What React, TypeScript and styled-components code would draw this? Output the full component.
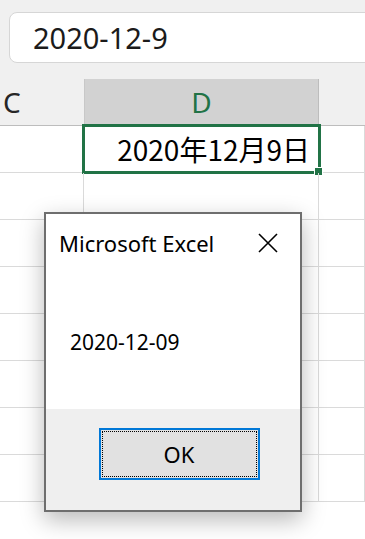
import styled, { createGlobalStyle } from "styled-components";

const GlobalStyle = createGlobalStyle`
    html, body {
        margin: 0;
        padding: 0;
        background: #ffffff;
    }
    body {
        font-family: "Noto Sans", "Open Sans", "Noto Sans CJK JP", sans-serif;
    }
`;

const Page = styled.div`
    position: relative;
    width: 365px;
    height: 539px;
    overflow: hidden;
    background: #ffffff;
`;

const FormulaArea = styled.div`
    height: 79px;
    box-sizing: border-box;
    padding: 12px 0 0 9px;
    background: #f0f0f0;
`;

const FormulaBox = styled.div`
    width: 400px;
    height: 51px;
    box-sizing: border-box;
    display: flex;
    align-items: center;
    padding-left: 23px;
    background: #ffffff;
    border: 1px solid #d6d6d6;
    border-radius: 8px;
    font-size: 29px;
    color: #1b1b1b;
`;

const HeaderRow = styled.div`
    display: grid;
    grid-template-columns: 84px 235px 1fr;
    height: 46px;
    background: #f0f0f0;
    border-bottom: 1px solid #bdbdbd;
`;

const HeaderCell = styled.div<{ $active?: boolean }>`
    display: flex;
    align-items: center;
    justify-content: ${(p) => (p.$active ? "center" : "flex-start")};
    padding-left: ${(p) => (p.$active ? "0" : "3px")};
    font-size: 28px;
    color: ${(p) => (p.$active ? "#217346" : "#262626")};
    background: ${(p) => (p.$active ? "#d2d2d2" : "transparent")};
    border-right: ${(p) => (p.$active ? "1px solid #bdbdbd" : "none")};
    border-left: ${(p) => (p.$active ? "1px solid #c8c8c8" : "none")};
`;

const Row = styled.div`
    display: grid;
    grid-template-columns: 84px 235px 1fr;
    height: 47px;
    box-sizing: border-box;
    border-bottom: 1px solid #dadada;
`;

const Cell = styled.div`
    position: relative;
    display: flex;
    align-items: center;
    justify-content: flex-end;
    padding-right: 8px;
    border-right: 1px solid #dadada;
    font-family: "Noto Sans CJK JP", "Noto Sans", sans-serif;
    font-size: 28px;
    color: #000000;
`;

const Selection = styled.div`
    position: absolute;
    left: -2px;
    top: -2px;
    right: -3px;
    bottom: -2px;
    border: 3px solid #217346;
    pointer-events: none;
`;

const FillHandle = styled.div`
    position: absolute;
    right: -5px;
    bottom: -5px;
    width: 7px;
    height: 7px;
    background: #217346;
    border: 1px solid #ffffff;
`;

const Dialog = styled.div`
    position: absolute;
    left: 44px;
    top: 212px;
    width: 258px;
    height: 300px;
    box-sizing: border-box;
    display: flex;
    flex-direction: column;
    border: 2px solid #6e6e6e;
    background: #ffffff;
    box-shadow: 0 8px 22px rgba(0, 0, 0, 0.28);
`;

const TitleBar = styled.div`
    display: flex;
    align-items: center;
    justify-content: space-between;
    height: 58px;
    padding: 0 22px 0 13px;
    font-size: 22px;
    color: #000000;
`;

const Message = styled.div`
    flex: 1;
    padding: 56px 0 0 24px;
    font-size: 21px;
    color: #000000;
`;

const ButtonBar = styled.div`
    height: 101px;
    box-sizing: border-box;
    display: flex;
    align-items: flex-start;
    justify-content: center;
    padding: 19px 0 0 12px;
    background: #efefef;
`;

const OkButton = styled.button`
    width: 161px;
    height: 52px;
    box-sizing: border-box;
    padding: 0;
    border: 2px solid #0078d7;
    background: #e1e1e1;
    font-family: inherit;
    font-size: 22px;
    color: #000000;
    outline: 1px dotted #000000;
    outline-offset: -4px;
`;

function CloseIcon() {
    return (
        <svg width="20" height="20" viewBox="0 0 20 20">
            <path d="M1 1 L19 19 M19 1 L1 19" stroke="#000" strokeWidth="1.6" fill="none" />
        </svg>
    );
}

function App() {
    const rows = Array.from({ length: 8 });

    return (
        <>
            <GlobalStyle />
            <Page>
                <FormulaArea>
                    <FormulaBox>2020-12-9</FormulaBox>
                </FormulaArea>
                <HeaderRow>
                    <HeaderCell>C</HeaderCell>
                    <HeaderCell $active>D</HeaderCell>
                    <HeaderCell />
                </HeaderRow>
                {rows.map((_, i) => (
                    <Row key={i}>
                        <Cell />
                        <Cell>
                            {i === 0 && (
                                <>
                                    2020年12月9日
                                    <Selection>
                                        <FillHandle />
                                    </Selection>
                                </>
                            )}
                        </Cell>
                        <Cell />
                    </Row>
                ))}
                <Dialog>
                    <TitleBar>
                        <span>Microsoft Excel</span>
                        <CloseIcon />
                    </TitleBar>
                    <Message>2020-12-09</Message>
                    <ButtonBar>
                        <OkButton>OK</OkButton>
                    </ButtonBar>
                </Dialog>
            </Page>
        </>
    );
}

export default App;
